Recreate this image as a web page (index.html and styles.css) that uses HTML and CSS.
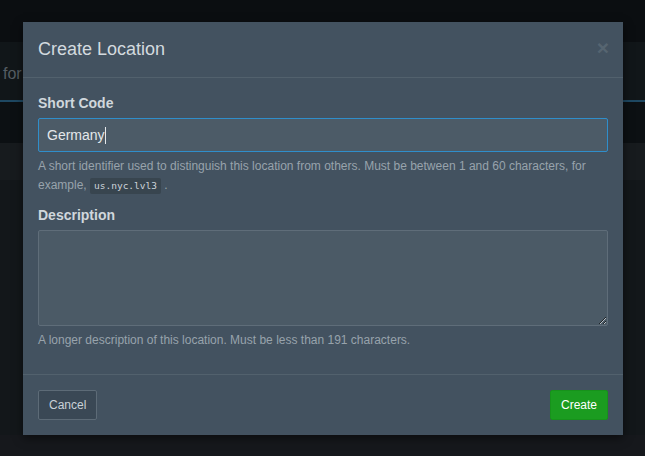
FILE: index.html
```html
<!DOCTYPE html>
<html>
<head>
<meta charset="utf-8">
<link rel="stylesheet" href="styles.css">
</head>
<body>
<div class="page">
  <div class="topbar"></div>
  <div class="searchbar"><span class="search-text">for</span></div>
  <div class="subbar"></div>
  <div class="tablehead"></div>
  <div class="content"></div>
</div>
<div class="backdrop"></div>
<div class="modal">
  <div class="modal-header">
    <h4 class="modal-title">Create Location</h4>
    <span class="close">&times;</span>
  </div>
  <div class="modal-body">
    <div class="form-group">
      <label class="label" for="short">Short Code</label>
      <div class="input focused" id="short">Germany<span class="caret"></span></div>
      <p class="help">A short identifier used to distinguish this location from others. Must be between 1 and 60 characters, for example, <code class="code">us.nyc.lvl3</code>&nbsp;.</p>
    </div>
    <div class="form-group">
      <label class="label" for="desc">Description</label>
      <textarea class="input textarea" id="desc"></textarea>
      <p class="help">A longer description of this location. Must be less than 191 characters.</p>
    </div>
  </div>
  <div class="modal-footer">
    <button class="btn btn-cancel">Cancel</button>
    <button class="btn btn-create">Create</button>
  </div>
</div>
</body>
</html>
```

FILE: styles.css
```css
html, body {
  margin: 0;
  padding: 0;
  height: 100%;
  overflow: hidden;
}
body {
  background: #13171a;
  font-family: "Liberation Sans", Arial, sans-serif;
}
.page {
  display: flex;
  flex-direction: column;
  height: 456px;
}
.topbar {
  height: 42px;
  background: #0b0e11;
}
.searchbar {
  height: 58px;
  background: #111619;
  border-bottom: 2px solid #1e4862;
  display: flex;
  align-items: center;
}
.search-text {
  margin-left: 3px;
  margin-top: 6px;
  color: #555d63;
  font-size: 16px;
}
.subbar {
  height: 41px;
  background: #0c1013;
}
.tablehead {
  height: 37px;
  background: #171b1e;
}
.content {
  flex: 1;
  background: #13171a;
}
.backdrop {
  position: absolute;
  left: 0;
  top: 435px;
  right: 0;
  bottom: 0;
  background: #16181c;
}
.modal {
  position: absolute;
  left: 23px;
  top: 22px;
  width: 600px;
  background: #435260;
  box-shadow: 0 3px 9px rgba(0, 0, 0, 0.5);
}
.modal-header {
  display: flex;
  justify-content: space-between;
  align-items: center;
  padding: 15px;
  border-bottom: 1px solid #52616d;
}
.modal-title {
  margin: 0;
  font-size: 18px;
  font-weight: normal;
  line-height: 25px;
  color: #d3dadf;
}
.close {
  font-size: 21px;
  font-weight: bold;
  line-height: 1;
  color: #566571;
  margin-right: -1px;
  margin-top: -4px;
}
.modal-body {
  padding: 15px 15px 14px 15px;
}
.form-group {
  margin-bottom: 10px;
}
.label {
  display: block;
  font-size: 14px;
  font-weight: bold;
  line-height: 20px;
  color: #d0d7dc;
  margin-bottom: 5px;
}
.input {
  display: block;
  box-sizing: border-box;
  width: 100%;
  height: 34px;
  padding: 7px 8px;
  font-family: "Liberation Sans", Arial, sans-serif;
  font-size: 14px;
  line-height: 18px;
  color: #e4e8eb;
  background: #4c5b67;
  border: 1px solid #5f6d79;
  border-radius: 2px;
  outline: none;
  margin: 0;
}
.input.focused {
  border-color: #2f8ecb;
}
.caret {
  display: inline-block;
  width: 1px;
  height: 17px;
  background: #e4e8eb;
  vertical-align: -4px;
}
.textarea {
  height: 96px;
  background: #4b5a66;
  resize: vertical;
}
.help {
  margin: 5px 0 0 0;
  font-size: 12px;
  line-height: 19px;
  color: #98a3ac;
}
.code {
  display: inline-block;
  font-family: "DejaVu Sans Mono", "Liberation Mono", monospace;
  font-size: 9.5px;
  line-height: 12px;
  padding: 2px 4px;
  background: #38454f;
  color: #cdd4da;
  border-radius: 2px;
}
.modal-footer {
  display: flex;
  justify-content: space-between;
  align-items: center;
  padding: 15px;
  border-top: 1px solid #52616d;
}
.btn {
  font-family: "Liberation Sans", Arial, sans-serif;
  font-size: 12px;
  line-height: 17px;
  padding: 5px 10px;
  border-radius: 2px;
  height: 30px;
  cursor: pointer;
}
.btn-cancel {
  background: #3a4855;
  border: 1px solid #5d6b77;
  color: #c9d1d7;
}
.btn-create {
  background: #1b9c20;
  border: 1px solid #17921b;
  color: #ffffff;
  padding: 5px 10px;
}
```
